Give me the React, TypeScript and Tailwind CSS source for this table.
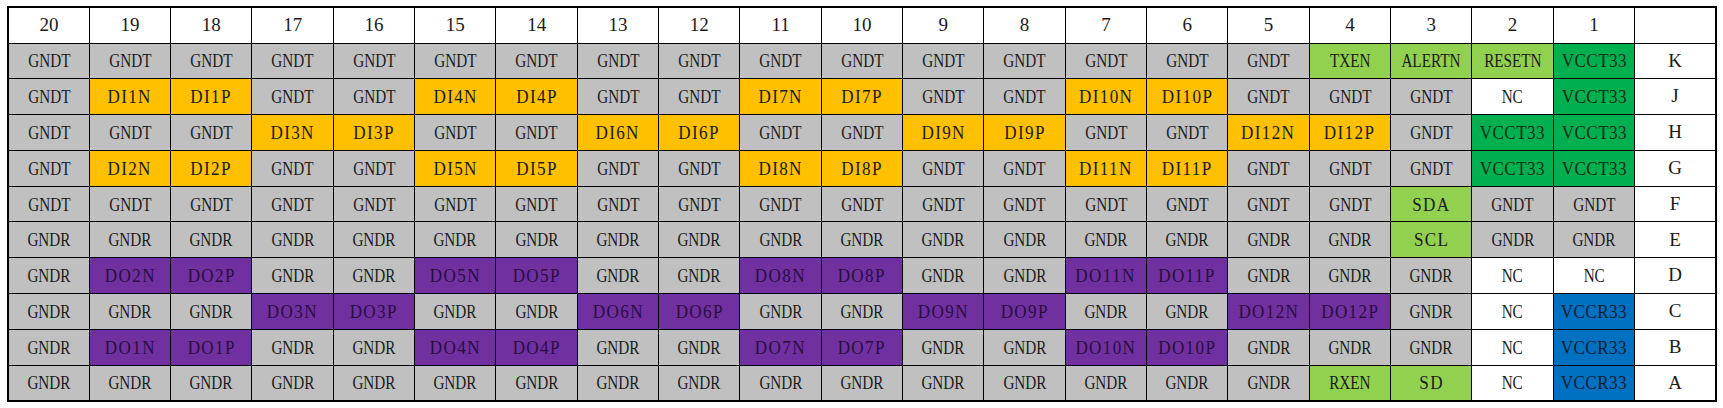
const C = {
  g: "bg-[#c0c0c0]",
  o: "bg-[#ffc000]",
  p: "bg-[#7030a0] text-[#2a0d3f]",
  l: "bg-[#92d050]",
  d: "bg-[#00b050] text-[#0c2e14]",
  b: "bg-[#0070c0] text-[#0a1f33]",
  w: "bg-white",
};

type Kind = keyof typeof C;

function kindOf(label: string): Kind {
  if (label.startsWith("GND")) return "g";
  if (label.startsWith("DI")) return "o";
  if (label.startsWith("DO")) return "p";
  if (label.startsWith("VCCT")) return "d";
  if (label.startsWith("VCCR")) return "b";
  if (label === "NC") return "w";
  return "l";
}

// the sheet draws some labels with wider, even letter spacing
function textClass(label: string) {
  if (label.startsWith("VCC")) return "inline-block scale-x-[0.9] tracking-[0.5px]";
  if (/^(DI|DO|SD$|SDA|SCL)/.test(label)) return "inline-block scale-x-[0.9] tracking-[1.5px]";
  return "inline-block scale-x-[0.8]";
}

function diffRow(base: string, prefix: string, startCol: number, first: number) {
  const row: string[] = Array(20).fill(base);
  for (let i = 0; i < 4; i++) {
    const s = startCol + i * 4;
    if (s + 1 > 19) break;
    const n = first + i * 3;
    row[s] = `${prefix}${n}N`;
    row[s + 1] = `${prefix}${n}P`;
  }
  return row;
}

function withTail(row: string[], tail: string[]) {
  const r = [...row];
  r.splice(20 - tail.length, tail.length, ...tail);
  return r;
}

const rows: { letter: string; cells: string[] }[] = [
  { letter: "K", cells: withTail(Array(20).fill("GNDT"), ["TXEN", "ALERTN", "RESETN", "VCCT33"]) },
  { letter: "J", cells: withTail(diffRow("GNDT", "DI", 1, 1), ["GNDT", "GNDT", "NC", "VCCT33"]) },
  { letter: "H", cells: withTail(diffRow("GNDT", "DI", 3, 3), ["GNDT", "VCCT33", "VCCT33"]) },
  { letter: "G", cells: withTail(diffRow("GNDT", "DI", 1, 2), ["GNDT", "GNDT", "VCCT33", "VCCT33"]) },
  { letter: "F", cells: withTail(Array(20).fill("GNDT"), ["SDA", "GNDT", "GNDT"]) },
  { letter: "E", cells: withTail(Array(20).fill("GNDR"), ["SCL", "GNDR", "GNDR"]) },
  { letter: "D", cells: withTail(diffRow("GNDR", "DO", 1, 2), ["GNDR", "GNDR", "NC", "NC"]) },
  { letter: "C", cells: withTail(diffRow("GNDR", "DO", 3, 3), ["GNDR", "NC", "VCCR33"]) },
  { letter: "B", cells: withTail(diffRow("GNDR", "DO", 1, 1), ["GNDR", "GNDR", "NC", "VCCR33"]) },
  { letter: "A", cells: withTail(Array(20).fill("GNDR"), ["RXEN", "SD", "NC", "VCCR33"]) },
];

const cols = Array.from({ length: 20 }, (_, i) => 20 - i);

export default function App() {
  return (
    <div className="min-h-[408px] w-[1723px] bg-white pl-[7px] pt-[6px] font-['Liberation_Serif',serif] text-[#1a1a1a]">
      <table className="w-[1710px] table-fixed border-collapse border-2 border-black text-center text-[19px]">
        <thead>
          <tr className="h-[36px]">
            {cols.map((c) => (
              <th key={c} className="border border-black bg-white font-normal">
                {c}
              </th>
            ))}
            <th className="border border-black bg-white" />
          </tr>
        </thead>
        <tbody>
          {rows.map((r) => (
            <tr key={r.letter} className="h-[35.8px]">
              {r.cells.map((label, i) => (
                <td key={i} className={`border border-black p-0 leading-none ${C[kindOf(label)]}`}>
                  <span className={textClass(label)}>{label}</span>
                </td>
              ))}
              <td className="border border-black bg-white">{r.letter}</td>
            </tr>
          ))}
        </tbody>
      </table>
    </div>
  );
}
